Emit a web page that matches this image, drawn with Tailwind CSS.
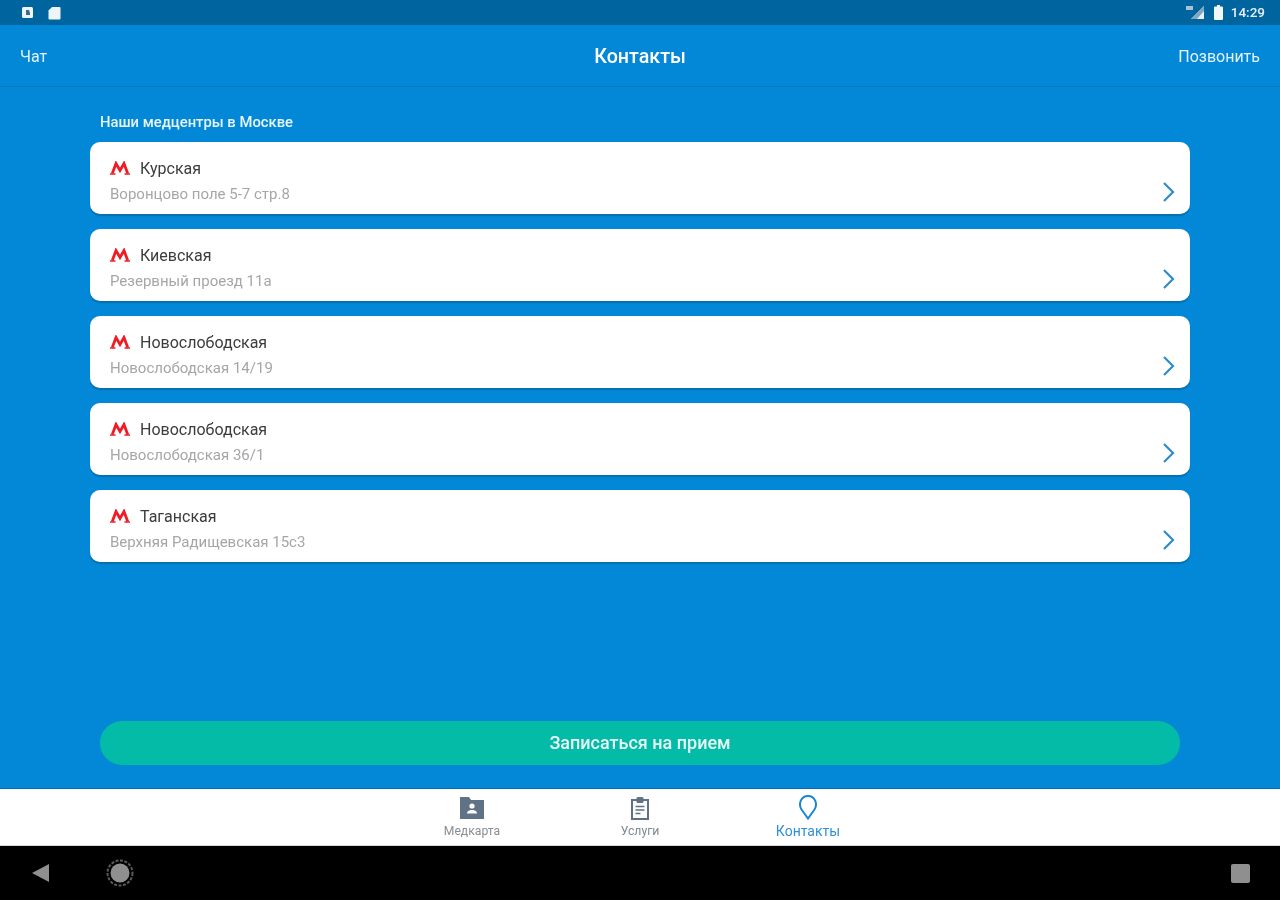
<!DOCTYPE html>
<html lang="ru">
<head>
<meta charset="utf-8">
<script src="https://cdn.jsdelivr.net/npm/@tailwindcss/browser@4"></script>
</head>
<body class="m-0">
<div class="w-[1280px] h-[900px] overflow-hidden flex flex-col font-['Roboto','Noto_Sans',sans-serif] bg-[#0288d6] blur-[0.6px]">
  <!-- status bar -->
  <div class="h-[25px] shrink-0 bg-[#00649f] flex items-center justify-between pl-[21px] pr-[15px]">
    <div class="flex items-center gap-[14px]">
      <svg width="13" height="13" viewBox="0 0 13 13"><rect x="1" y="1" width="11" height="11" rx="1.500" fill="#eef5f9"/><path d="M5 4h3l1 3v2H5z" fill="#3d6c88"/></svg>
      <svg width="13" height="14" viewBox="0 0 13 14"><path d="M4 1h7.500a1 1 0 0 1 1 1v10.500a1 1 0 0 1-1 1h-10a1 1 0 0 1-1-1V4.500z" fill="#eef5f9"/></svg>
    </div>
    <div class="flex items-center">
      <svg width="19" height="15" viewBox="0 0 19 15"><path d="M18 1v13H5z" fill="#e6eff5"/><path d="M18 1v5l-7 8H5z" fill="#7fa7c0"/><rect x="0" y="1" width="7" height="4" fill="#a9c4d6"/></svg>
      <svg class="ml-[9px]" width="9" height="15" viewBox="0 0 9 15"><path d="M3 0h3v1.500h2a1 1 0 0 1 1 1V14a1 1 0 0 1-1 1H1a1 1 0 0 1-1-1V2.500a1 1 0 0 1 1-1h2z" fill="#f1f6f9"/></svg>
      <span class="ml-[8px] text-[13.500px] leading-none font-medium text-[#e6f0f6]">14:29</span>
    </div>
  </div>
  <!-- header -->
  <div class="h-[62px] shrink-0 pt-[2px] border-b border-[#0a79bb] flex items-center justify-between px-5 relative text-white">
    <span class="text-[16px] font-normal text-[#e4f2fb]">Чат</span>
    <span class="absolute left-0 right-0 text-center text-[19.700px] font-medium">Контакты</span>
    <span class="text-[16px] font-normal text-[#e4f2fb]">Позвонить</span>
  </div>
  <!-- content -->
  <div class="flex-1 flex flex-col px-[90px] relative">
    <div class="pl-[10px] pt-[26px] h-[55px] text-[14.800px] leading-[18px] font-medium text-[#e8f4fc]">Наши медцентры в Москве</div>
    <div class="flex flex-col gap-[15px]">
      <div class="h-[72px] bg-white rounded-[10px] shadow-[0_2px_1px_#0670ad] pl-5 pr-[15px] flex items-center justify-between">
        <div class="pt-[5px]">
          <div class="flex items-center h-[20px]">
            <svg class="w-[20px] h-[14px] mb-[2px]" viewBox="0 0 20 14"><path d="M2.300 12.500 6 2.500 10 9.500 14 2.500 17.700 12.500" fill="none" stroke="#ee1c25" stroke-width="2.800"/><path d="M0 13h5.500M14.500 13h5.500" stroke="#ee1c25" stroke-width="1.600"/></svg>
            <span class="ml-[10px] text-[16px] text-[#3c3c3c]">Курская</span>
          </div>
          <div class="mt-[6px] text-[15px] leading-[18px] text-[#a6a6a6]">Воронцово поле 5-7 стр.8</div>
        </div>
        <svg class="mt-[28px]" width="14" height="22" viewBox="0 0 14 22"><path d="M3 2 12 11 3 20" fill="none" stroke="#2f8ccb" stroke-width="2.200"/></svg>
      </div>
      <div class="h-[72px] bg-white rounded-[10px] shadow-[0_2px_1px_#0670ad] pl-5 pr-[15px] flex items-center justify-between">
        <div class="pt-[5px]">
          <div class="flex items-center h-[20px]">
            <svg class="w-[20px] h-[14px] mb-[2px]" viewBox="0 0 20 14"><path d="M2.300 12.500 6 2.500 10 9.500 14 2.500 17.700 12.500" fill="none" stroke="#ee1c25" stroke-width="2.800"/><path d="M0 13h5.500M14.500 13h5.500" stroke="#ee1c25" stroke-width="1.600"/></svg>
            <span class="ml-[10px] text-[16px] text-[#3c3c3c]">Киевская</span>
          </div>
          <div class="mt-[6px] text-[15px] leading-[18px] text-[#a6a6a6]">Резервный проезд 11а</div>
        </div>
        <svg class="mt-[28px]" width="14" height="22" viewBox="0 0 14 22"><path d="M3 2 12 11 3 20" fill="none" stroke="#2f8ccb" stroke-width="2.200"/></svg>
      </div>
      <div class="h-[72px] bg-white rounded-[10px] shadow-[0_2px_1px_#0670ad] pl-5 pr-[15px] flex items-center justify-between">
        <div class="pt-[5px]">
          <div class="flex items-center h-[20px]">
            <svg class="w-[20px] h-[14px] mb-[2px]" viewBox="0 0 20 14"><path d="M2.300 12.500 6 2.500 10 9.500 14 2.500 17.700 12.500" fill="none" stroke="#ee1c25" stroke-width="2.800"/><path d="M0 13h5.500M14.500 13h5.500" stroke="#ee1c25" stroke-width="1.600"/></svg>
            <span class="ml-[10px] text-[16px] text-[#3c3c3c]">Новослободская</span>
          </div>
          <div class="mt-[6px] text-[15px] leading-[18px] text-[#a6a6a6]">Новослободская 14/19</div>
        </div>
        <svg class="mt-[28px]" width="14" height="22" viewBox="0 0 14 22"><path d="M3 2 12 11 3 20" fill="none" stroke="#2f8ccb" stroke-width="2.200"/></svg>
      </div>
      <div class="h-[72px] bg-white rounded-[10px] shadow-[0_2px_1px_#0670ad] pl-5 pr-[15px] flex items-center justify-between">
        <div class="pt-[5px]">
          <div class="flex items-center h-[20px]">
            <svg class="w-[20px] h-[14px] mb-[2px]" viewBox="0 0 20 14"><path d="M2.300 12.500 6 2.500 10 9.500 14 2.500 17.700 12.500" fill="none" stroke="#ee1c25" stroke-width="2.800"/><path d="M0 13h5.500M14.500 13h5.500" stroke="#ee1c25" stroke-width="1.600"/></svg>
            <span class="ml-[10px] text-[16px] text-[#3c3c3c]">Новослободская</span>
          </div>
          <div class="mt-[6px] text-[15px] leading-[18px] text-[#a6a6a6]">Новослободская 36/1</div>
        </div>
        <svg class="mt-[28px]" width="14" height="22" viewBox="0 0 14 22"><path d="M3 2 12 11 3 20" fill="none" stroke="#2f8ccb" stroke-width="2.200"/></svg>
      </div>
      <div class="h-[72px] bg-white rounded-[10px] shadow-[0_2px_1px_#0670ad] pl-5 pr-[15px] flex items-center justify-between">
        <div class="pt-[5px]">
          <div class="flex items-center h-[20px]">
            <svg class="w-[20px] h-[14px] mb-[2px]" viewBox="0 0 20 14"><path d="M2.300 12.500 6 2.500 10 9.500 14 2.500 17.700 12.500" fill="none" stroke="#ee1c25" stroke-width="2.800"/><path d="M0 13h5.500M14.500 13h5.500" stroke="#ee1c25" stroke-width="1.600"/></svg>
            <span class="ml-[10px] text-[16px] text-[#3c3c3c]">Таганская</span>
          </div>
          <div class="mt-[6px] text-[15px] leading-[18px] text-[#a6a6a6]">Верхняя Радищевская 15с3</div>
        </div>
        <svg class="mt-[28px]" width="14" height="22" viewBox="0 0 14 22"><path d="M3 2 12 11 3 20" fill="none" stroke="#2f8ccb" stroke-width="2.200"/></svg>
      </div>
    </div>
    <div class="mt-auto mb-[23px] mx-[10px] h-[44px] pb-[1px] rounded-full bg-[#03bba6] flex items-center justify-center text-[18px] font-medium text-[#e6f8f5]">Записаться на прием</div>
  </div>
  <!-- tab bar -->
  <div class="h-[57px] shrink-0 bg-white border-t border-[#0670ad] flex justify-center">
    <div class="w-[168px] flex flex-col items-center pt-[6px]">
      <svg width="26" height="26" viewBox="0 0 26 26"><path d="M1 2h9l2 3h13v19H1z" fill="#5f7286"/><circle cx="13" cy="11" r="2.600" fill="#fff"/><path d="M8 18.500c0-2.500 2.500-3.500 5-3.500s5 1 5 3.500z" fill="#fff"/></svg>
      <span class="text-[12.200px] leading-[12px] text-[#8a8f94] mt-[4px]">Медкарта</span>
    </div>
    <div class="w-[168px] flex flex-col items-center pt-[6px]">
      <svg width="26" height="26" viewBox="0 0 26 26"><path d="M5 5h16v19H5z" fill="#fff" stroke="#5f7286" stroke-width="2"/><rect x="9.500" y="2" width="7" height="6" rx="1.500" fill="#5f7286"/><path d="M8.500 11.500h9M8.500 15h9M8.500 18.500h5" stroke="#5f7286" stroke-width="1.600"/></svg>
      <span class="text-[12.200px] leading-[12px] text-[#7f8a94] mt-[4px]">Услуги</span>
    </div>
    <div class="w-[168px] flex flex-col items-center pt-[5px]">
      <svg width="26" height="26" viewBox="0 0 26 26"><path d="M13 24.500 6.500 15.500C3 10 6 2 13 2s10 8 6.500 13.500z" fill="none" stroke="#1a86cf" stroke-width="2"/></svg>
      <span class="text-[14px] leading-[12px] text-[#2f8fd8] mt-[5px]">Контакты</span>
    </div>
  </div>
  <!-- android nav -->
  <div class="h-[55px] shrink-0 bg-black border-t border-[#d8d8d8] flex items-center pl-[31px] pr-[30px] relative">
    <svg width="20" height="22" viewBox="0 0 20 22"><path d="M1 11 18 2v18z" fill="#8f8f8f"/></svg>
    <svg class="ml-[55px]" width="28" height="28" viewBox="0 0 28 28"><circle cx="14" cy="14" r="12.500" fill="none" stroke="#5a5a5a" stroke-width="2" stroke-dasharray="3 1.500"/><circle cx="14" cy="14" r="9.500" fill="#8f8f8f"/></svg>
    <div class="ml-auto w-[19px] h-[19px] rounded-[2px] bg-[#8f8f8f]"></div>
  </div>
</div>
</body>
</html>
